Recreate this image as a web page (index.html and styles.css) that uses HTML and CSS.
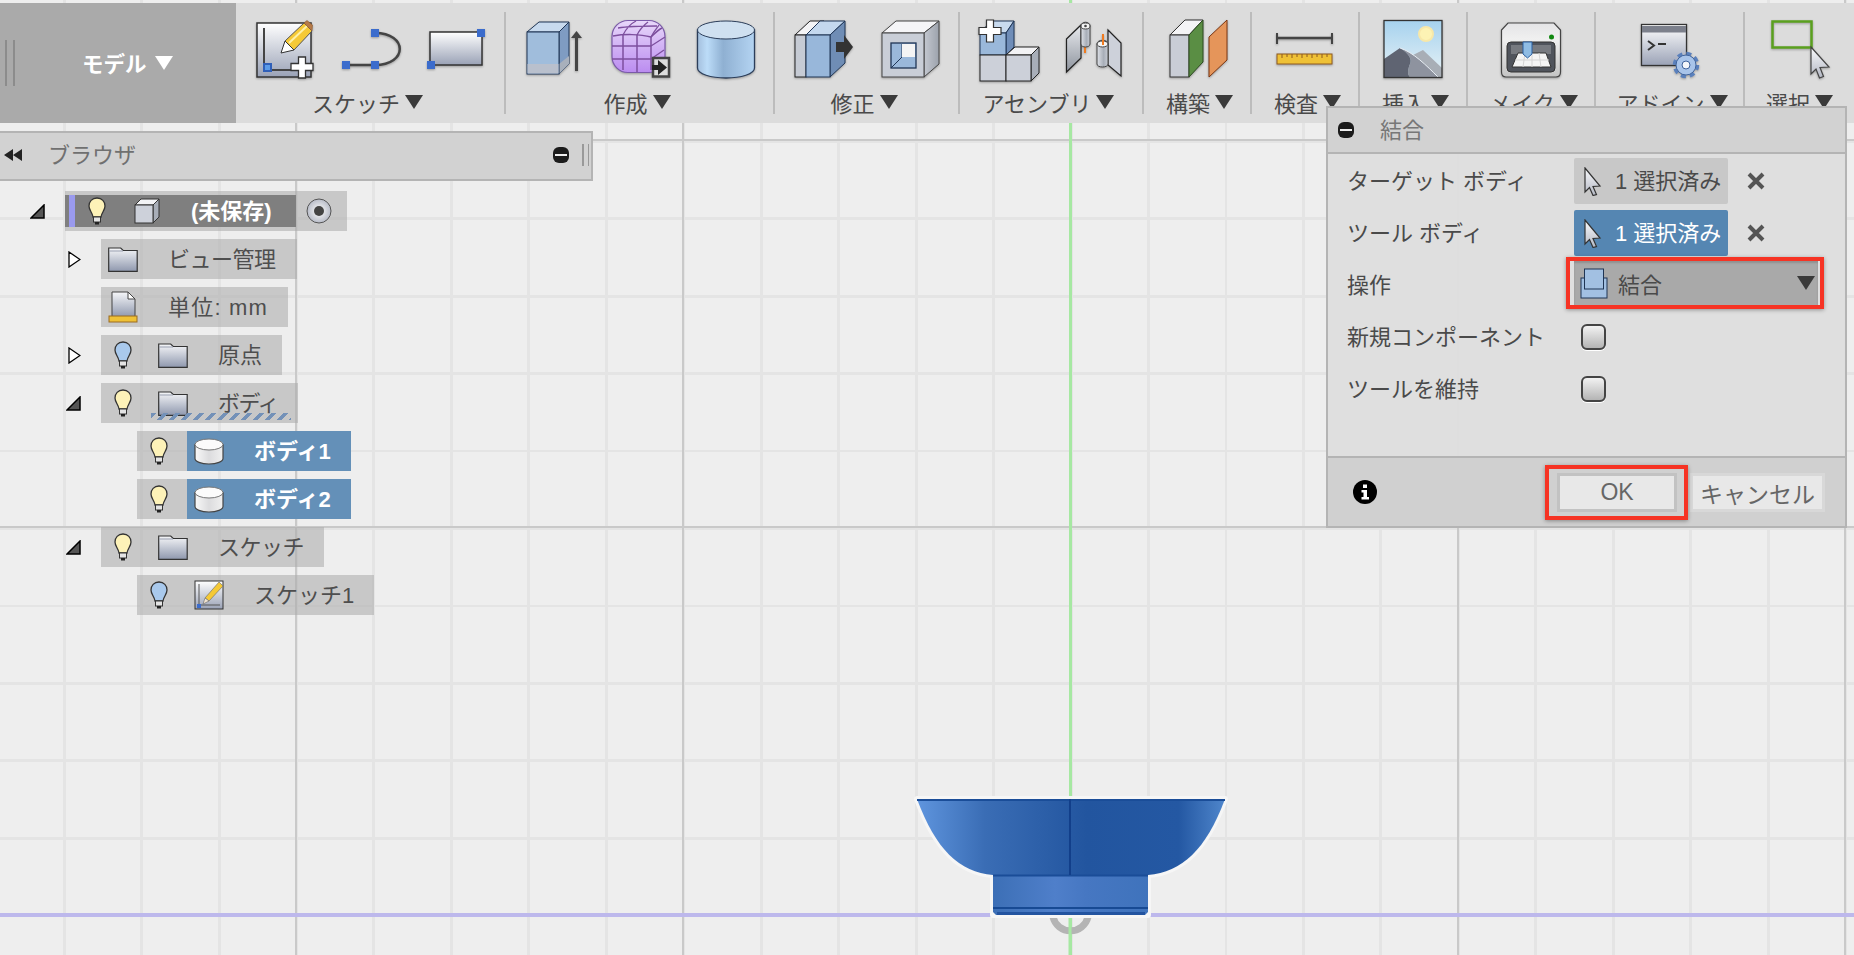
FILE: index.html
```html
<!DOCTYPE html>
<html lang="ja">
<head>
    <meta charset="UTF-8">
    <title>結合</title>
    <link rel="stylesheet" href="styles.css">
</head>
<body>
<svg class="defs" width="0" height="0">
    <defs>
        <linearGradient id="gSheet" x1="0" y1="0" x2="0" y2="1"><stop offset="0" stop-color="#ffffff"/><stop offset="1" stop-color="#9aa2b6"/></linearGradient>
        <linearGradient id="gFolder" x1="0" y1="0" x2="0" y2="1"><stop offset="0" stop-color="#f6f7f9"/><stop offset="1" stop-color="#8f98ae"/></linearGradient>
        <linearGradient id="gCyl" x1="0" y1="0" x2="1" y2="0"><stop offset="0" stop-color="#a4bfdd"/><stop offset=".17" stop-color="#bcdcf8"/><stop offset=".45" stop-color="#8fb0d2"/><stop offset="1" stop-color="#b4d4f2"/></linearGradient>
        <linearGradient id="gWhiteCyl" x1="0" y1="0" x2="1" y2="0"><stop offset="0" stop-color="#f8f8f8"/><stop offset=".5" stop-color="#dcdcde"/><stop offset="1" stop-color="#f0f0f0"/></linearGradient>
        <linearGradient id="gDarkCyl" x1="0" y1="0" x2="1" y2="0"><stop offset="0" stop-color="#dfe2e8"/><stop offset=".6" stop-color="#a8aeb8"/><stop offset="1" stop-color="#c8ccd4"/></linearGradient>
        <linearGradient id="gPurple" x1="0" y1="0" x2="0" y2="1"><stop offset="0" stop-color="#e8d8fa"/><stop offset="1" stop-color="#bb8cf0"/></linearGradient>
        <linearGradient id="gGrey" x1="0" y1="0" x2="1" y2="0"><stop offset="0" stop-color="#c4c8d0"/><stop offset="1" stop-color="#9ca2ac"/></linearGradient>
        <linearGradient id="gPlate" x1="0" y1="0" x2="0" y2="1"><stop offset="0" stop-color="#e8eaee"/><stop offset="1" stop-color="#8e949e"/></linearGradient>
        <linearGradient id="gSky" x1="0" y1="0" x2="0" y2="1"><stop offset="0" stop-color="#a6d2ee"/><stop offset="1" stop-color="#e8f2f6"/></linearGradient>
        <linearGradient id="gBody" x1="0" y1="0" x2="0" y2="1"><stop offset="0" stop-color="#e4e4e6"/><stop offset=".3" stop-color="#f0f0f0"/><stop offset="1" stop-color="#c4c4c4"/></linearGradient>
        <linearGradient id="gCursor" x1="0" y1="0" x2="0" y2="1"><stop offset="0" stop-color="#fafbfd"/><stop offset="1" stop-color="#b4b8c4"/></linearGradient>
        <linearGradient id="gBowl" x1="0" y1="0" x2="1" y2="0"><stop offset="0" stop-color="#5f95de"/><stop offset=".22" stop-color="#3a6db5"/><stop offset=".55" stop-color="#22559f"/><stop offset=".85" stop-color="#2458a3"/><stop offset="1" stop-color="#4f86cc"/></linearGradient>
        <linearGradient id="gFoot" x1="0" y1="0" x2="1" y2="0"><stop offset="0" stop-color="#3c6fb6"/><stop offset=".4" stop-color="#4f7fca"/><stop offset=".6" stop-color="#4677c2"/><stop offset="1" stop-color="#3f73bc"/></linearGradient>
        <radialGradient id="gRadio"><stop offset="0" stop-color="#ffffff"/><stop offset="1" stop-color="#b8bcc8"/></radialGradient>

        <symbol id="bulbY" viewBox="0 0 18 28">
            <path d="M9 1C4 1 1 4.600 1 9c0 4.500 3.500 6.500 4 11h8c.5-4.500 4-6.500 4-11 0-4.400-3-8-8-8z" fill="#fdf2b8" stroke="#333" stroke-width="1.300"/>
            <rect x="5.500" y="20" width="7" height="5" fill="#e4e4e4" stroke="#333"/>
            <rect x="7" y="25" width="4" height="2.500" fill="#222"/>
        </symbol>
        <symbol id="bulbB" viewBox="0 0 18 28">
            <path d="M9 1C4 1 1 4.600 1 9c0 4.500 3.500 6.500 4 11h8c.5-4.500 4-6.500 4-11 0-4.400-3-8-8-8z" fill="#a9c9ec" stroke="#333" stroke-width="1.300"/>
            <rect x="5.500" y="20" width="7" height="5" fill="#e4e4e4" stroke="#333"/>
            <rect x="7" y="25" width="4" height="2.500" fill="#222"/>
        </symbol>
        <symbol id="folder" viewBox="0 0 30 25">
            <path d="M.7 24.300V1h12l2.500 2.500h14v20.800z" fill="url(#gFolder)" stroke="#333" stroke-width="1.200"/>
            <path d="M1 4h14" stroke="#9aa0b0" fill="none"/>
        </symbol>
        <symbol id="cursor" viewBox="0 0 18 29">
            <path d="M1 1l15 18-7 .5 3.500 8-3.500 1-3.500-8L1 25z" fill="url(#gCursor)" stroke="#333" stroke-width="1.200"/>
        </symbol>
        <symbol id="cylWhite" viewBox="0 0 30 27">
            <path d="M1 6.500v14c0 3 6 5.500 14 5.500s14-2.500 14-5.500v-14z" fill="url(#gWhiteCyl)" stroke="#444" stroke-width="1.200"/>
            <ellipse cx="15" cy="6.500" rx="14" ry="5.500" fill="#fbfbfb" stroke="#777"/>
        </symbol>
    </defs>
</svg>

<div class="app">
    <div class="axis-green"></div>
    <div class="axis-purple"></div>

    <svg class="bowl" viewBox="900 780 340 175" width="340" height="175">
        <path d="M1053 917a18 18 0 0 0 35 0" fill="none" stroke="#b4b4b4" stroke-width="7"/>
        <path d="M1070 918v37" stroke="#a6e8a2" stroke-width="3"/>
        <path d="M917 799H1225C1206 850 1182 872 1148 875V915H993V875C959 872 936 850 917 799Z" fill="#f6f6f6" stroke="#f6f6f6" stroke-width="6" stroke-linejoin="round"/>
        <path d="M917 799H1225C1206 850 1182 872 1148 875H993C959 872 936 850 917 799Z" fill="url(#gBowl)"/>
        <path d="M993 875H1148V912L1145 915H996L993 912Z" fill="url(#gFoot)"/>
        <path d="M917 800H1225M993 875.500H1148" stroke="#1a4d98" stroke-width="2" fill="none"/>
        <path d="M1070 799V875" stroke="#123f8a" stroke-width="2"/>
        <path d="M993 908H1148" stroke="#174a94" stroke-width="2"/>
        <path d="M997 912H1145V915H997z" fill="#2354a0"/>
    </svg>

    <header class="toolbar">
        <div class="mode">
            <span class="grip"></span>
            <span class="mode-label">モデル</span>
            <span class="caret caret-white"></span>
        </div>

        <section class="group w-sketch">
            <div class="icons">
                <svg class="tool" viewBox="0 0 60 60">
                    <rect x="3" y="3" width="54" height="54" fill="url(#gSheet)" stroke="#333" stroke-width="1.500"/>
                    <path d="M10 8V50H37" fill="none" stroke="#444" stroke-width="2"/>
                    <rect x="10" y="44" width="7" height="7" fill="#5b9be8" stroke="#2f5fb8" stroke-width="2"/>
                    <path d="M31 21L50 3l8 8-18 19z" fill="#f5c936" stroke="#555"/>
                    <path d="M35 23L53 6" stroke="#fdf0a8" stroke-width="2"/>
                    <path d="M50 3l3-2.500 5.500 4.500-.5 6z" fill="#b67a48" stroke="#8a5a30" stroke-width=".6"/>
                    <path d="M31 21l-4 12 13-3z" fill="#fff" stroke="#333"/>
                    <path d="M44.500 37h7v6.500H59v7h-7.500V58h-7v-7.500H37v-7h7.500z" fill="#fff" stroke="#333" stroke-width="1.300"/>
                </svg>
                <svg class="tool" viewBox="0 0 60 60">
                    <path d="M6 45H35M35 13C68 13 68 45 35 45" fill="none" stroke="#444" stroke-width="2.500"/>
                    <rect x="31" y="9" width="8" height="8" fill="#3b6ccc"/>
                    <rect x="2" y="41" width="8" height="8" fill="#3b6ccc"/>
                    <rect x="31" y="41" width="8" height="8" fill="#3b6ccc"/>
                </svg>
                <svg class="tool" viewBox="0 0 60 60">
                    <rect x="4" y="12" width="52" height="33" fill="url(#gSheet)" stroke="#333" stroke-width="1.500"/>
                    <rect x="51" y="9" width="8" height="8" fill="#3b6ccc"/>
                    <rect x="1" y="41" width="8" height="8" fill="#3b6ccc"/>
                </svg>
            </div>
            <div class="label label-left">スケッチ<span class="caret"></span></div>
        </section>
        <div class="sep"></div>

        <section class="group w-create">
            <div class="icons">
                <svg class="tool" viewBox="0 0 60 60">
                    <path d="M3 12L15 2H45L35 12z" fill="#c8daee" stroke="#1f3555"/>
                    <path d="M35 12L45 2V44L35 54z" fill="#7f9cc2" stroke="#1f3555"/>
                    <path d="M35 44L45 36V44L35 54z" fill="#a8b0bc"/>
                    <rect x="3" y="12" width="32" height="42" fill="#a0bddc" stroke="#1f3555"/>
                    <rect x="3.500" y="44" width="31" height="9.500" fill="#b9c0cd"/>
                    <path d="M52.500 51V16" stroke="#444" stroke-width="3"/>
                    <path d="M47 18l5.500-7 5.500 7z" fill="#444"/>
                </svg>
                <svg class="tool" viewBox="0 0 60 60">
                    <rect x="2" y="0.500" width="53" height="52" rx="16" fill="url(#gPurple)" stroke="#7a5aa8" stroke-width="1.200"/>
                    <path d="M3 16C14 14 30 14 41 17C46 12 50 9 52 8" fill="none" stroke="#7d4f9e" stroke-width="1.500"/>
                    <path d="M13 15V50M27 15V52M41 17V50M2 26H41M2 39H41" fill="none" stroke="#7d4f9e" stroke-width="1.500"/>
                    <path d="M13 15C16 9 20 4 26 1M27 15C30 9 34 5 38 2M41 17C44 11 47 8 49 5M8 8C20 6 34 6 47 6M41 26L55 17M41 39L54 30" fill="none" stroke="#7d4f9e" stroke-width="1.300"/>
                    <rect x="43" y="38" width="16" height="18.500" fill="#dcdcdc" stroke="#444" stroke-width="2.500"/>
                    <path d="M42 45h6v-5l9 7.500-9 7.500v-5h-6z" fill="#222"/>
                </svg>
                <svg class="tool" viewBox="0 0 60 60">
                    <path d="M1.500 10V48C1.500 54 15 58 30 58S58.500 54 58.500 48V10z" fill="url(#gCyl)" stroke="#2c3e5a" stroke-width="1.300"/>
                    <ellipse cx="30" cy="10" rx="28.500" ry="9" fill="#cfe0f0" stroke="#2c3e5a" stroke-width="1"/>
                </svg>
            </div>
            <div class="label label-left">作成<span class="caret"></span></div>
        </section>
        <div class="sep"></div>

        <section class="group w-modify">
            <div class="icons">
                <svg class="tool" viewBox="0 0 60 60">
                    <path d="M1 15L16 1H30L12 15z" fill="#f4f4f6" stroke="#222"/>
                    <rect x="1" y="15" width="11" height="42" fill="#c6cbd4" stroke="#222"/>
                    <path d="M12 15L26 1H51L36 15z" fill="#c4d8ee" stroke="#1f3555"/>
                    <path d="M36 15L51 1V43L36 57z" fill="#6f8db5" stroke="#1f3555"/>
                    <rect x="12" y="15" width="24" height="42" fill="#98b7da" stroke="#1f3555"/>
                    <path d="M42 22h8v-7l9 12-9 12v-7h-8z" fill="#333"/>
                </svg>
                <svg class="tool" viewBox="0 0 60 60">
                    <path d="M2 13L16 1H59L44 13z" fill="#f5f5f7" stroke="#444"/>
                    <path d="M44 13L59 1V44L44 57z" fill="url(#gGrey)" stroke="#444"/>
                    <rect x="2" y="13" width="42" height="44" fill="#c9ced7" stroke="#444"/>
                    <rect x="11" y="23" width="25" height="25" fill="#9ab8da" stroke="#1f3555" stroke-width="1.300"/>
                    <path d="M22 24V37L11 48" fill="none" stroke="#1f3555"/>
                    <rect x="22" y="24" width="13" height="13" fill="#f4f4f4"/>
                </svg>
            </div>
            <div class="label label-left">修正<span class="caret"></span></div>
        </section>
        <div class="sep"></div>

        <section class="group w-assembly">
            <div class="icons">
                <svg class="tool" viewBox="0 0 60 60">
                    <path d="M2 13L13 1H36L28 13z" fill="#c8daee" stroke="#1f3555"/>
                    <path d="M28 13L36 1V27L28 35z" fill="#6f8db8" stroke="#1f3555"/>
                    <rect x="2" y="13" width="26" height="22" fill="#9ab8da" stroke="#1f3555"/>
                    <path d="M28 35L37 27H61L53 35z" fill="#f2f2f4" stroke="#222"/>
                    <path d="M53 35L61 27V53L53 61z" fill="#a8aeb8" stroke="#222"/>
                    <rect x="2" y="35" width="26" height="26" fill="#ccd0d9" stroke="#222"/>
                    <rect x="28" y="35" width="25" height="26" fill="#ccd0d9" stroke="#222"/>
                    <path d="M8.500 0h7v7.500H23v7h-7.500V22h-7v-7.500H1v-7h7.500z" fill="#fff" stroke="#333" stroke-width="1.200"/>
                </svg>
                <svg class="tool" viewBox="0 0 60 60">
                    <path d="M2.500 19L17 5V38L2.500 52z" fill="url(#gPlate)" stroke="#222" stroke-width="1.200"/>
                    <path d="M21 27v6" stroke="#f07b20" stroke-width="2"/>
                    <path d="M17 6c0-5 9-5 9 0V24c0 4-9 4-9 0z" fill="url(#gDarkCyl)" stroke="#444"/>
                    <ellipse cx="21.500" cy="6" rx="4.500" ry="3" fill="#f4f4f4" stroke="#444"/>
                    <circle cx="21.500" cy="6" r="1.300" fill="#444"/>
                    <path d="M44 10L57 23V56L44 45z" fill="#cdd1da" stroke="#222" stroke-width="1.200"/>
                    <path d="M33 24c0-5 11-5 11 0V44c0 4-11 4-11 0z" fill="url(#gDarkCyl)" stroke="#444"/>
                    <ellipse cx="38.500" cy="24" rx="5.500" ry="3" fill="#f4f4f4" stroke="#444"/>
                    <path d="M39 14v11" stroke="#f07b20" stroke-width="2"/>
                </svg>
            </div>
            <div class="label label-left">アセンブリ<span class="caret"></span></div>
        </section>
        <div class="sep"></div>

        <section class="group w-small">
            <div class="icons">
                <svg class="tool" viewBox="0 0 60 60">
                    <path d="M3 15L18 0H36L22 15z" fill="#f4f4f6" stroke="#333"/>
                    <rect x="3" y="15" width="19" height="42" fill="#c9cdd6" stroke="#333"/>
                    <path d="M22 15L36 0V42L22 57z" fill="#5a8e44" stroke="#2c4a20"/>
                    <path d="M42 17L60 0V40L42 57z" fill="#e5955a" stroke="#7a3410"/>
                </svg>
            </div>
            <div class="label label-right">構築<span class="caret"></span></div>
        </section>
        <div class="sep"></div>

        <section class="group w-small">
            <div class="icons">
                <svg class="tool" viewBox="0 0 60 60">
                    <path d="M2 18H57" stroke="#444" stroke-width="2.500"/>
                    <path d="M2 13V24M57 13V24" stroke="#444" stroke-width="2"/>
                    <rect x="2" y="34" width="55" height="10" fill="#efc136" stroke="#8f5a20"/>
                    <path d="M7 34v4M12 34v3M17 34v4M22 34v3M27 34v4M32 34v3M37 34v4M42 34v3M47 34v4M52 34v3" stroke="#8f5a20" fill="none"/>
                </svg>
            </div>
            <div class="label label-right">検査<span class="caret"></span></div>
        </section>
        <div class="sep"></div>

        <section class="group w-small">
            <div class="icons">
                <svg class="tool" viewBox="0 0 60 60">
                    <rect x="1" y="0.500" width="58" height="57" fill="url(#gSky)"/>
                    <circle cx="43" cy="14" r="7" fill="#fdf3b4" stroke="#f8e8a8" stroke-width="2"/>
                    <path d="M28 36L40 30L59 48V57H55C46 48 37 40 28 36Z" fill="#a8aeb6"/>
                    <path d="M17 28C30 32 44 46 55 57H27C24 54 25 49 27 44C29 40 27 34 17 28Z" fill="#8e939f"/>
                    <path d="M1 39L17 28C27 34 29 40 27 44C25 49 24 54 27 57H1Z" fill="#5f6472"/>
                    <path d="M17 28C30 32 44 46 55 57" fill="none" stroke="#e8eef4"/>
                    <rect x="1" y="0.500" width="58" height="57" fill="none" stroke="#333" stroke-width="1.300"/>
                </svg>
            </div>
            <div class="label label-right">挿入<span class="caret"></span></div>
        </section>
        <div class="sep"></div>

        <section class="group w-make">
            <div class="icons">
                <svg class="tool" viewBox="0 0 60 60">
                    <path d="M7 3H53L59.500 10V52Q59.500 57 55 57H5Q.5 57 .5 52V10z" fill="url(#gBody)" stroke="#444" stroke-width="1.200"/>
                    <rect x="6" y="22" width="48" height="30" rx="4" fill="#50545c" stroke="#333"/>
                    <rect x="10" y="25" width="40" height="9" fill="#777a80"/>
                    <path d="M17 33H45L50 47H11z" fill="#f4f4f4" stroke="#333"/>
                    <path d="M24 33L22 47M31 33V47M38 33L40 47M14 40H48" stroke="#d4d4d4" fill="none"/>
                    <path d="M22 22h9v12l-4.500 4-4.500-4z" fill="#8fbce4" stroke="#2a5ea0"/>
                    <circle cx="50.500" cy="17" r="2.500" fill="#118811"/>
                </svg>
            </div>
            <div class="label label-right">メイク<span class="caret"></span></div>
        </section>
        <div class="sep"></div>

        <section class="group w-addin">
            <div class="icons">
                <svg class="tool" viewBox="0 0 60 60">
                    <rect x="1.500" y="4.500" width="45" height="41" fill="url(#gSheet)" stroke="#333" stroke-width="1.300"/>
                    <rect x="2" y="6" width="44" height="6.500" fill="#7c808c"/>
                    <path d="M8 21l6 4.500-6 4.500" fill="none" stroke="#333" stroke-width="2"/>
                    <path d="M18 24h8" stroke="#333" stroke-width="2"/>
                    <circle cx="46" cy="45" r="11.500" fill="none" stroke="#5a80bc" stroke-width="3.500" stroke-dasharray="5 4.030"/>
                    <circle cx="46" cy="45" r="10" fill="#a8c4ea" stroke="#3f639c"/>
                    <circle cx="46" cy="45" r="4" fill="#f4f6fa" stroke="#3f639c"/>
                </svg>
            </div>
            <div class="label label-right">アドイン<span class="caret"></span></div>
        </section>
        <div class="sep"></div>

        <section class="group w-select">
            <div class="icons">
                <svg class="tool" viewBox="0 0 60 60">
                    <rect x="2.500" y="1.500" width="39" height="26" fill="none" stroke="#5aa01e" stroke-width="2.500"/>
                    <path d="M41 27l18 20-9 .5 3.500 9-4 1.500-3.500-9L41 54z" fill="url(#gCursor)" stroke="#444" stroke-width="1.200"/>
                </svg>
            </div>
            <div class="label">選択<span class="caret"></span></div>
        </section>
    </header>

    <aside class="browser">
        <div class="browser-head">
            <svg class="rewind" viewBox="0 0 20 14" width="20" height="14"><path d="M10 1v12L1 7zM19 1v12l-9-6z" fill="#222"/></svg>
            <span class="browser-title">ブラウザ</span>
            <span class="minus"></span>
            <span class="grip-small"></span>
        </div>

        <div class="tree">
            <div class="row lv0">
                <span class="slot"><svg width="15" height="15" viewBox="0 0 15 15"><path d="M1 14L14 1V14z" fill="#555" stroke="#000" stroke-width="1.500"/></svg></span>
                <div class="chip chip-root">
                    <div class="root-active">
                        <span class="strip"></span>
                        <svg class="bulb" width="18" height="28"><use href="#bulbY"/></svg>
                        <svg class="cube" width="26" height="26" viewBox="0 0 26 26">
                            <path d="M1 7L7 1H25L19 7z" fill="#f2f3f5" stroke="#333"/>
                            <path d="M19 7L25 1V19L19 25z" fill="#a8aeb8" stroke="#333"/>
                            <rect x="1" y="7" width="18" height="18" fill="#cdd1da" stroke="#333"/>
                        </svg>
                        <span class="name name-root">(未保存)</span>
                    </div>
                    <svg class="radio" width="26" height="26" viewBox="0 0 26 26">
                        <circle cx="13" cy="13" r="12" fill="url(#gRadio)" stroke="#555"/>
                        <circle cx="13" cy="13" r="5" fill="#444"/>
                    </svg>
                </div>
            </div>

            <div class="row lv1">
                <span class="slot"><svg class="tri-closed" width="13" height="17" viewBox="0 0 13 17"><path d="M1 1L12 8.500 1 16z" fill="#fff" stroke="#000" stroke-width="1.300"/></svg></span>
                <div class="chip chip-nobulb chip-view">
                    <svg class="icon-folder" width="30" height="25"><use href="#folder"/></svg>
                    <span class="name name-view">ビュー管理</span>
                </div>
            </div>

            <div class="row lv1">
                <span class="slot"></span>
                <div class="chip chip-nobulb">
                    <svg class="icon-units" width="30" height="32" viewBox="0 0 30 32">
                        <path d="M4 1H20L27 8V26H4z" fill="url(#gFolder)" stroke="#444"/>
                        <path d="M20 1V8H27z" fill="#fff" stroke="#444"/>
                        <rect x="1" y="25" width="28" height="6" fill="#efc136" stroke="#9a6a20"/>
                    </svg>
                    <span class="name name-units">単位: mm</span>
                </div>
            </div>

            <div class="row lv1">
                <span class="slot"><svg class="tri-closed" width="13" height="17" viewBox="0 0 13 17"><path d="M1 1L12 8.500 1 16z" fill="#fff" stroke="#000" stroke-width="1.300"/></svg></span>
                <div class="chip">
                    <svg class="bulb" width="18" height="28"><use href="#bulbB"/></svg>
                    <svg class="icon-folder" width="30" height="25"><use href="#folder"/></svg>
                    <span class="name">原点</span>
                </div>
            </div>

            <div class="row lv1">
                <span class="slot"><svg width="15" height="15" viewBox="0 0 15 15"><path d="M1 14L14 1V14z" fill="#555" stroke="#000" stroke-width="1.500"/></svg></span>
                <div class="chip chip-dashed">
                    <svg class="bulb" width="18" height="28"><use href="#bulbY"/></svg>
                    <svg class="icon-folder" width="30" height="25"><use href="#folder"/></svg>
                    <span class="name name-body">ボディ</span>
                    <span class="dashes"></span>
                </div>
            </div>

            <div class="row lv2">
                <span class="slot"></span>
                <div class="chip chip-body">
                    <svg class="bulb" width="18" height="28"><use href="#bulbY"/></svg>
                    <div class="picked">
                        <svg class="icon-cyl" width="30" height="27"><use href="#cylWhite"/></svg>
                        <span class="name name-white">ボディ1</span>
                    </div>
                </div>
            </div>

            <div class="row lv2">
                <span class="slot"></span>
                <div class="chip chip-body">
                    <svg class="bulb" width="18" height="28"><use href="#bulbY"/></svg>
                    <div class="picked">
                        <svg class="icon-cyl" width="30" height="27"><use href="#cylWhite"/></svg>
                        <span class="name name-white">ボディ2</span>
                    </div>
                </div>
            </div>

            <div class="row lv1">
                <span class="slot"><svg width="15" height="15" viewBox="0 0 15 15"><path d="M1 14L14 1V14z" fill="#555" stroke="#000" stroke-width="1.500"/></svg></span>
                <div class="chip">
                    <svg class="bulb" width="18" height="28"><use href="#bulbY"/></svg>
                    <svg class="icon-folder" width="30" height="25"><use href="#folder"/></svg>
                    <span class="name name-tight">スケッチ</span>
                </div>
            </div>

            <div class="row lv2">
                <span class="slot"></span>
                <div class="chip">
                    <svg class="bulb" width="18" height="28"><use href="#bulbB"/></svg>
                    <svg class="icon-folder" width="30" height="30" viewBox="0 0 30 30">
                        <rect x="1" y="1" width="28" height="28" fill="url(#gSheet)" stroke="#333"/>
                        <path d="M5 4V25H26" fill="none" stroke="#555"/>
                        <path d="M11 18L25 2l4 4-14 15z" fill="#f5c936" stroke="#666" stroke-width=".6"/>
                        <path d="M11 18l-2 6 6-3z" fill="#f2e4d0" stroke="#666" stroke-width=".6"/>
                        <rect x="3" y="24" width="4" height="4" fill="#3b6ccc"/>
                    </svg>
                    <span class="name">スケッチ1</span>
                </div>
            </div>
        </div>
    </aside>

    <div class="dialog">
        <div class="dialog-head">
            <span class="minus"></span>
            <span class="dialog-title">結合</span>
        </div>

        <div class="dialog-body">
            <div class="field">
                <span class="field-label">ターゲット ボディ</span>
                <div class="pick">
                    <svg class="pick-cursor" width="18" height="29"><use href="#cursor"/></svg>
                    <span class="pick-text">1 選択済み</span>
                </div>
                <svg class="clear" width="18" height="18" viewBox="0 0 18 18"><path d="M2 2L16 16M16 2L2 16" stroke="#555" stroke-width="4"/></svg>
            </div>
            <div class="field">
                <span class="field-label">ツール ボディ</span>
                <div class="pick pick-active">
                    <svg class="pick-cursor" width="18" height="29"><use href="#cursor"/></svg>
                    <span class="pick-text">1 選択済み</span>
                </div>
                <svg class="clear" width="18" height="18" viewBox="0 0 18 18"><path d="M2 2L16 16M16 2L2 16" stroke="#555" stroke-width="4"/></svg>
            </div>
            <div class="field">
                <span class="field-label">操作</span>
                <div class="dropdown">
                    <svg class="drop-icon" width="28" height="31" viewBox="0 0 28 31">
                        <rect x="1" y="10" width="26" height="20" fill="#a2c0e2" stroke="#1f3555"/>
                        <rect x="4.500" y="1" width="19" height="20" fill="#a2c0e2" stroke="#1f3555"/>
                    </svg>
                    <span class="drop-text">結合</span>
                    <span class="caret"></span>
                </div>
            </div>
            <div class="field">
                <span class="field-label">新規コンポーネント</span>
                <span class="check"></span>
            </div>
            <div class="field">
                <span class="field-label">ツールを維持</span>
                <span class="check"></span>
            </div>
        </div>

        <div class="dialog-foot">
            <svg class="info" width="24" height="24" viewBox="0 0 24 24">
                <circle cx="12" cy="12" r="12" fill="#000"/>
                <rect x="10" y="4.500" width="4" height="3.500" fill="#fff"/>
                <path d="M8.500 10H14V17H16V19.500H8.500V17H10.500V12.500H8.500z" fill="#fff"/>
            </svg>
            <button class="btn btn-ok">OK</button>
            <button class="btn btn-cancel">キャンセル</button>
        </div>

        <span class="mark mark-select"></span>
        <span class="mark mark-ok"></span>
    </div>
</div>
</body>
</html>
```

FILE: styles.css
```css
* {
    box-sizing: border-box;
}

html, body {
    margin: 0;
    padding: 0;
}

body {
    font-family: "Liberation Sans", "Noto Sans CJK JP", sans-serif;
    color: #4a4a4a;
    overflow: hidden;
}

.defs {
    position: absolute;
}

.app {
    position: relative;
    width: 1854px;
    height: 955px;
    overflow: hidden;
    padding-top: 3px;
    background-color: #eeeeee;
    background-image:
        repeating-linear-gradient(to right, transparent 0 295px, #c9c9c9 295px 297px, transparent 297px 387.3px),
        repeating-linear-gradient(to bottom, transparent 0 139px, #c9c9c9 139px 141px, transparent 141px 387.5px),
        repeating-linear-gradient(to right, transparent 0 62.6px, #e4e4e4 62.6px 65.6px, transparent 65.6px 77.46px),
        repeating-linear-gradient(to bottom, transparent 0 62px, #e4e4e4 62px 65px, transparent 65px 77.5px);
}

.axis-green {
    position: absolute;
    left: 1069px;
    top: 0;
    width: 3px;
    height: 100%;
    background: #a6e8a2;
}

.axis-purple {
    position: absolute;
    left: 0;
    top: 913px;
    width: 100%;
    height: 4px;
    background: #bdb8ec;
}

.bowl {
    position: absolute;
    left: 900px;
    top: 780px;
}

/* ツールバー */
.toolbar {
    position: relative;
    display: flex;
    height: 120px;
    background-color: #dcdcdc;
}

.mode {
    display: flex;
    align-items: center;
    width: 236px;
    flex: none;
    padding-left: 5px;
    background-color: #aaaaaa;
    color: #fff;
}

.grip {
    width: 10px;
    height: 46px;
    margin-right: 67px;
    border-left: 2px solid #8c8c8c;
    border-right: 2px solid #8c8c8c;
}

.mode-label {
    font-size: 21.5px;
    font-weight: bold;
    margin-right: 8px;
    padding-bottom: 2px;
}

.caret {
    display: inline-block;
    flex: none;
    width: 0;
    height: 0;
    border-left: 9px solid transparent;
    border-right: 9px solid transparent;
    border-top: 14px solid #3a3a3a;
}

.caret-white {
    border-top-color: #fff;
}

.group {
    flex: none;
    padding-top: 17px;
}

.w-sketch { width: 268px; }
.w-create { width: 267px; }
.w-modify { width: 183px; }
.w-assembly { width: 182px; }
.w-small { width: 106px; }
.w-make { width: 126px; }
.w-addin { width: 147px; }
.w-select { flex: 1; }

.sep {
    flex: none;
    width: 2px;
    margin: 9px 0 9px;
    background-color: #bcbcbc;
}

.icons {
    display: flex;
    justify-content: center;
    gap: 26px;
    height: 60px;
}

.tool {
    display: block;
    width: 60px;
    height: 60px;
    flex: none;
    overflow: visible;
    filter: drop-shadow(0 1px 1px rgba(0, 0, 0, 0.3));
}

.label {
    display: flex;
    align-items: center;
    justify-content: center;
    gap: 5px;
    height: 28px;
    margin-top: 8px;
    font-size: 22px;
    white-space: nowrap;
}

.label-left {
    padding-right: 5px;
}

.label-right {
    padding-left: 5px;
}

/* ブラウザ */
.browser {
    position: absolute;
    left: 0;
    top: 131px;
    width: 593px;
}

.browser-head {
    display: flex;
    align-items: center;
    height: 50px;
    padding: 0 0 2px 3px;
    background-color: #d2d2d2;
    border-top: 2px solid #b4b4b4;
    border-right: 2px solid #b4b4b4;
    border-bottom: 2px solid #b4b4b4;
}

.browser-title {
    margin-left: 25px;
    padding-bottom: 4px;
    font-size: 22px;
    color: #707070;
}

.minus {
    position: relative;
    display: block;
    flex: none;
    width: 16px;
    height: 16px;
    border-radius: 6px;
    background-color: #1c1c1c;
}

.minus::after {
    content: "";
    position: absolute;
    left: 2px;
    right: 2px;
    top: 7px;
    height: 2px;
    background-color: #eee;
}

.browser-head .minus {
    margin-left: auto;
}

.grip-small {
    width: 7px;
    height: 22px;
    margin: 0 2px 0 13px;
    border-left: 2px solid #999;
    border-right: 1px solid #999;
}

.tree {
    display: flex;
    flex-direction: column;
    gap: 8px;
    margin-top: 10px;
}

.row {
    display: flex;
    align-items: center;
    height: 40px;
}

.lv0 { padding-left: 28px; }
.lv1 { padding-left: 64px; }
.lv2 { padding-left: 100px; }

.slot {
    display: flex;
    align-items: center;
    padding-left: 2px;
    width: 37px;
    height: 40px;
    flex: none;
}

.tri-closed {
    margin-left: 2px;
}

.chip {
    position: relative;
    display: flex;
    align-items: center;
    height: 40px;
    padding: 0 20px 0 13px;
    background-color: rgba(170, 170, 170, 0.55);
}

.bulb {
    flex: none;
    display: block;
}

.icon-folder {
    flex: none;
    margin-left: 26px;
}

.name {
    margin-left: 30px;
    padding-bottom: 5px;
    font-size: 22px;
    white-space: nowrap;
    color: #4e4e4e;
}

.name-tight {
    letter-spacing: -0.5px;
}

.name-body {
    letter-spacing: -1.5px;
}

.name-view {
    letter-spacing: -0.5px;
}

.chip-nobulb {
    padding-left: 7px;
}

.chip-view {
    padding-right: 21px;
}

.chip-nobulb .icon-folder {
    margin-left: 0;
}

.icon-units {
    flex: none;
}

.name-units {
    letter-spacing: 1.2px;
}

.chip-root {
    width: 282px;
    padding: 0;
}

.root-active {
    display: flex;
    align-items: center;
    width: 231px;
    height: 32px;
    padding-left: 4px;
    background-color: #7f7f7f;
}

.strip {
    width: 6px;
    height: 32px;
    margin-right: 13px;
    background-color: #9a9aee;
}

.cube {
    flex: none;
    margin-left: 28px;
}

.name-root {
    margin-left: 31px;
    color: #fff;
    font-weight: bold;
}

.radio {
    margin-left: 10px;
    flex: none;
}

.dashes {
    position: absolute;
    left: 50px;
    top: 30px;
    width: 140px;
    height: 7px;
    background-image: repeating-linear-gradient(135deg, #7391b8 0 4px, transparent 4px 8.5px);
}

.chip-body {
    padding: 0 0 0 13px;
}

.picked {
    display: flex;
    align-items: center;
    height: 40px;
    margin-left: 19px;
    padding: 0 20px 0 7px;
    background-color: #6490b8;
}

.icon-cyl {
    flex: none;
}

.name-white {
    color: #fff;
    font-weight: bold;
}

/* ダイアログ */
.dialog {
    position: absolute;
    left: 1326px;
    top: 106px;
    width: 521px;
    height: 422px;
    display: flex;
    flex-direction: column;
    background-color: rgba(222, 222, 222, 0.97);
    border: 2px solid #b4b4b4;
}

.dialog-head {
    display: flex;
    align-items: center;
    flex: none;
    height: 46px;
    padding-left: 10px;
    background-color: #d2d2d2;
    border-bottom: 2px solid #b4b4b4;
}

.dialog-title {
    margin-left: 26px;
    padding-bottom: 5px;
    font-size: 22px;
    color: #777;
}

.dialog-body {
    flex: 1;
    display: flex;
    flex-direction: column;
    gap: 6px;
    padding: 4px 0 0 19px;
}

.field {
    display: flex;
    align-items: center;
    height: 46px;
}

.field-label {
    flex: none;
    width: 227px;
    padding-bottom: 5px;
    font-size: 22px;
    white-space: nowrap;
}

.pick {
    display: flex;
    align-items: center;
    width: 154px;
    height: 46px;
    padding-left: 10px;
    border-radius: 2px;
    background-color: #c8c8c8;
    font-size: 22px;
    white-space: nowrap;
}

.pick-text {
    padding-bottom: 5px;
}

.pick-active {
    background-color: #5586b2;
    color: #fff;
}

.pick-cursor {
    flex: none;
    margin-right: 13px;
}

.clear {
    margin-left: 19px;
}

.dropdown {
    display: flex;
    align-items: center;
    width: 244px;
    height: 45px;
    margin-top: -4px;
    padding: 0 3px 0 6px;
    background-color: #a9a9a9;
    box-shadow: inset 0 2px 2px rgba(0, 0, 0, 0.15);
}

.drop-icon {
    flex: none;
}

.drop-text {
    margin-left: 10px;
    padding-bottom: 1px;
    font-size: 22px;
}

.dropdown .caret {
    margin-left: auto;
}

.check {
    display: block;
    width: 25px;
    height: 26px;
    margin-left: 7px;
    border: 2px solid #444;
    border-radius: 6px;
    background: linear-gradient(#f2f2f2, #b4b4b4);
    box-shadow: 0 1px 0 #fff;
}

.dialog-foot {
    display: flex;
    align-items: center;
    flex: none;
    height: 70px;
    padding: 0 20px 0 25px;
    background-color: #d0d0d0;
    border-top: 2px solid #b4b4b4;
}

.info {
    flex: none;
    margin-right: auto;
}

.btn {
    height: 39px;
    padding: 0;
    font-family: inherit;
    font-size: 23px;
    color: #666;
    background-color: #e8e8e8;
    border: 3px solid #c2c2c2;
}

.btn-ok {
    width: 120px;
    margin-right: 13px;
}

.btn-cancel {
    width: 135px;
    border-color: #d8d8d8;
}

.mark {
    position: absolute;
    border: 4px solid #f63324;
    box-shadow: 0 1px 4px rgba(0, 0, 0, 0.35);
    pointer-events: none;
}

.mark-select {
    left: 238px;
    top: 149px;
    width: 258px;
    height: 52px;
}

.mark-ok {
    left: 217px;
    top: 357px;
    width: 143px;
    height: 55px;
}
```
